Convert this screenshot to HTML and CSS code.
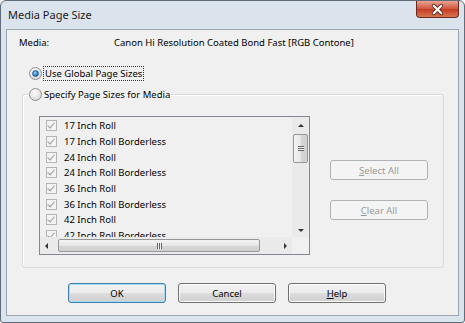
FILE: index.html
```html
<!DOCTYPE html>
<html lang="en">

<head>
    <meta charset="UTF-8">
    <title>Media Page Size</title>
    <link rel="stylesheet" href="styles.css">
</head>

<body>
    <div class="window">
        <div class="titlebar">
            <span class="title">Media Page Size</span>
            <span class="close">
                <svg width="43" height="17" viewBox="0 0 43 17">
                    <path d="M17.5 4.5 L25.5 12.5 M25.5 4.5 L17.5 12.5" stroke="#5a2a22" stroke-width="4" stroke-linecap="round" />
                    <path d="M17.5 4.5 L25.5 12.5 M25.5 4.5 L17.5 12.5" stroke="#fff" stroke-width="2.2" stroke-linecap="round" />
                </svg>
            </span>
        </div>

        <div class="client">
            <!-- 미디어 이름 -->
            <div class="media-row">
                <span class="media-label">Media:</span>
                <span>Canon Hi Resolution Coated Bond Fast [RGB Contone]</span>
            </div>

            <div class="radio-row">
                <span class="radio checked"></span>
                <span class="focus">Use Global Page Sizes</span>
            </div>

            <fieldset class="group">
                <legend><span class="radio"></span>Specify Page Sizes for Media</legend>
                <div class="group-body">
                    <div class="list">
                        <div class="items">
                            <div class="item"><span class="check"></span>17 Inch Roll</div>
                            <div class="item"><span class="check"></span>17 Inch Roll Borderless</div>
                            <div class="item"><span class="check"></span>24 Inch Roll</div>
                            <div class="item"><span class="check"></span>24 Inch Roll Borderless</div>
                            <div class="item"><span class="check"></span>36 Inch Roll</div>
                            <div class="item"><span class="check"></span>36 Inch Roll Borderless</div>
                            <div class="item"><span class="check"></span>42 Inch Roll</div>
                            <div class="item"><span class="check"></span>42 Inch Roll Borderless</div>
                        </div>
                        <div class="vscroll">
                            <span class="arrow up"></span>
                            <span class="vthumb"><span class="grip"></span></span>
                            <span class="arrow down"></span>
                        </div>
                        <div class="hscroll">
                            <span class="arrow left"></span>
                            <span class="hthumb"><span class="grip"></span></span>
                            <span class="arrow right"></span>
                        </div>
                        <div class="corner"></div>
                    </div>

                    <div class="side-buttons">
                        <button class="btn" disabled><u>S</u>elect All</button>
                        <button class="btn" disabled><u>C</u>lear All</button>
                    </div>
                </div>
            </fieldset>

            <!-- 확인, 취소, 도움말 -->
            <div class="dialog-buttons">
                <button class="btn default">OK</button>
                <button class="btn">Cancel</button>
                <button class="btn"><u>H</u>elp</button>
            </div>
        </div>
    </div>
</body>

</html>
```

FILE: styles.css
```css
body {
    margin: 0;
    padding: 0;
    background-color: #ffffff;
    font-family: "Noto Sans", "Liberation Sans", sans-serif;
    font-size: 9.5px;
    color: #000;
}

.window {
    width: 465px;
    height: 323px;
    box-sizing: border-box;
    border: 1px solid #5f6b78;
    border-radius: 6px 6px 3px 3px;
    background: #dbe3ec;
    display: flex;
    flex-direction: column;
}

.titlebar {
    height: 28px;
    display: flex;
    justify-content: space-between;
    align-items: flex-start;
    padding: 0 5px 0 7px;
}

.title {
    font-size: 11px;
    line-height: 28px;
    color: #1b1b1b;
}

.close {
    width: 43px;
    height: 17px;
    border: 1px solid #6b2a22;
    border-top: none;
    border-radius: 0 0 4px 4px;
    background: linear-gradient(#e8a493, #d0543c 50%, #c23b22 51%, #d9784f);
    box-sizing: border-box;
    display: flex;
}

.client {
    margin: 0 5px 0 5px;
    height: 287px;
    box-sizing: border-box;
    border: 1px solid #9aa6b3;
    background: #f0f0f0;
    display: flex;
    flex-direction: column;
}

.media-row {
    display: flex;
    padding: 6px 0 0 12px;
    line-height: 14px;
}

.media-label {
    width: 95px;
}

.radio-row {
    display: flex;
    align-items: center;
    margin-top: 16px;
    padding-left: 22px;
    height: 14px;
}

.radio {
    width: 13px;
    height: 13px;
    box-sizing: border-box;
    border-radius: 50%;
    border: 1px solid #8e8f8f;
    background: radial-gradient(circle at 40% 35%, #ffffff, #dcdcdc 70%);
    margin-right: 2px;
    display: inline-flex;
    align-items: center;
    justify-content: center;
    vertical-align: top;
}

.radio.checked::after {
    content: "";
    width: 5px;
    height: 5px;
    border-radius: 50%;
    background: radial-gradient(circle at 40% 35%, #8fd3ff, #1b6fb5 70%);
    border: 1px solid #2a5f94;
}

.focus {
    outline: 1px dotted #333;
    padding: 0 1px;
    line-height: 13px;
}

.group {
    margin: 8px 14px 0 15px;
    padding: 0 0 12px 0;
    border: 1px solid #d5dbdf;
    border-radius: 3px;
    box-shadow: inset 1px 1px 0 #fff;
    min-width: 0;
}

.group legend {
    margin-left: 5px;
    padding: 0 1px;
    line-height: 13px;
    display: flex;
    align-items: center;
}

.group-body {
    display: flex;
    padding: 15px 0 0 16px;
    gap: 20px;
}

.list {
    width: 271px;
    height: 139px;
    box-sizing: border-box;
    border: 1px solid #828790;
    background: #f0f0f0;
    display: grid;
    grid-template-columns: 1fr 17px;
    grid-template-rows: 1fr 17px;
}

.items {
    overflow: hidden;
    padding-top: 1px;
}

.item {
    height: 15.7px;
    display: flex;
    align-items: center;
    padding-left: 6px;
    white-space: nowrap;
}

.check {
    width: 11px;
    height: 11px;
    box-sizing: border-box;
    border: 1px solid #b4b4b4;
    background: #f4f4f4;
    margin-right: 7px;
    position: relative;
}

.check::after {
    content: "";
    position: absolute;
    left: 2px;
    top: 0px;
    width: 3px;
    height: 6px;
    border: solid #9c9c9c;
    border-width: 0 1.5px 1.5px 0;
    transform: rotate(40deg);
}

.vscroll {
    background: #eaeaea;
    display: flex;
    flex-direction: column;
    align-items: center;
    padding-top: 7px;
}

.hscroll {
    background: #eaeaea;
    display: flex;
    align-items: center;
    padding-left: 5px;
}

.corner {
    background: #f0f0f0;
}

.arrow {
    width: 0;
    height: 0;
    border: 3px solid transparent;
}

.arrow.up {
    border-bottom: 3px solid #333;
    border-top: none;
}

.arrow.down {
    border-top: 3px solid #333;
    border-bottom: none;
    margin-top: auto;
    margin-bottom: 5px;
}

.arrow.left {
    border-right: 3px solid #333;
    border-left: none;
}

.arrow.right {
    border-left: 3px solid #333;
    border-right: none;
    margin-left: 24px;
}

.vthumb {
    width: 15px;
    height: 29px;
    box-sizing: border-box;
    margin-top: 7px;
    border: 1px solid #979797;
    border-radius: 2px;
    background: linear-gradient(90deg, #f4f4f4, #e6e6e6 50%, #d6d6d6 51%, #d0d0d0);
    display: flex;
    align-items: center;
    justify-content: center;
}

.vthumb .grip {
    width: 6px;
    height: 5px;
    border-top: 1px solid #666;
    border-bottom: 1px solid #666;
    box-sizing: border-box;
    background: linear-gradient(#f0f0f0 0 1px, #666 1px 2px, #f0f0f0 2px);
}

.hthumb {
    width: 202px;
    height: 13px;
    box-sizing: border-box;
    margin-left: 10px;
    border: 1px solid #979797;
    border-radius: 2px;
    background: linear-gradient(#f4f4f4, #e6e6e6 50%, #d6d6d6 51%, #d0d0d0);
    display: flex;
    align-items: center;
    justify-content: center;
}

.hthumb .grip {
    width: 5px;
    height: 6px;
    border-left: 1px solid #666;
    border-right: 1px solid #666;
    box-sizing: border-box;
    background: linear-gradient(90deg, #f0f0f0 0 1px, #666 1px 2px, #f0f0f0 2px);
}

.side-buttons {
    display: flex;
    flex-direction: column;
    gap: 20px;
    padding-top: 44px;
}

.btn {
    width: 98px;
    height: 20px;
    padding: 0;
    font-family: inherit;
    font-size: 9.5px;
    color: #000;
    border: 1px solid #707070;
    border-radius: 3px;
    background: linear-gradient(#f2f2f2, #ebebeb 50%, #dddddd 51%, #cfcfcf);
    box-shadow: inset 0 0 0 1px #fcfcfc;
}

.btn:disabled {
    color: #9a9a9a;
    border-color: #adb2b5;
    background: #f4f4f4;
    box-shadow: none;
}

.btn.default {
    border-color: #3c7fb1;
    box-shadow: inset 0 0 0 1px #a8dcf5;
}

.dialog-buttons {
    display: flex;
    gap: 12px;
    padding-left: 61px;
    margin-top: 15px;
}
```
